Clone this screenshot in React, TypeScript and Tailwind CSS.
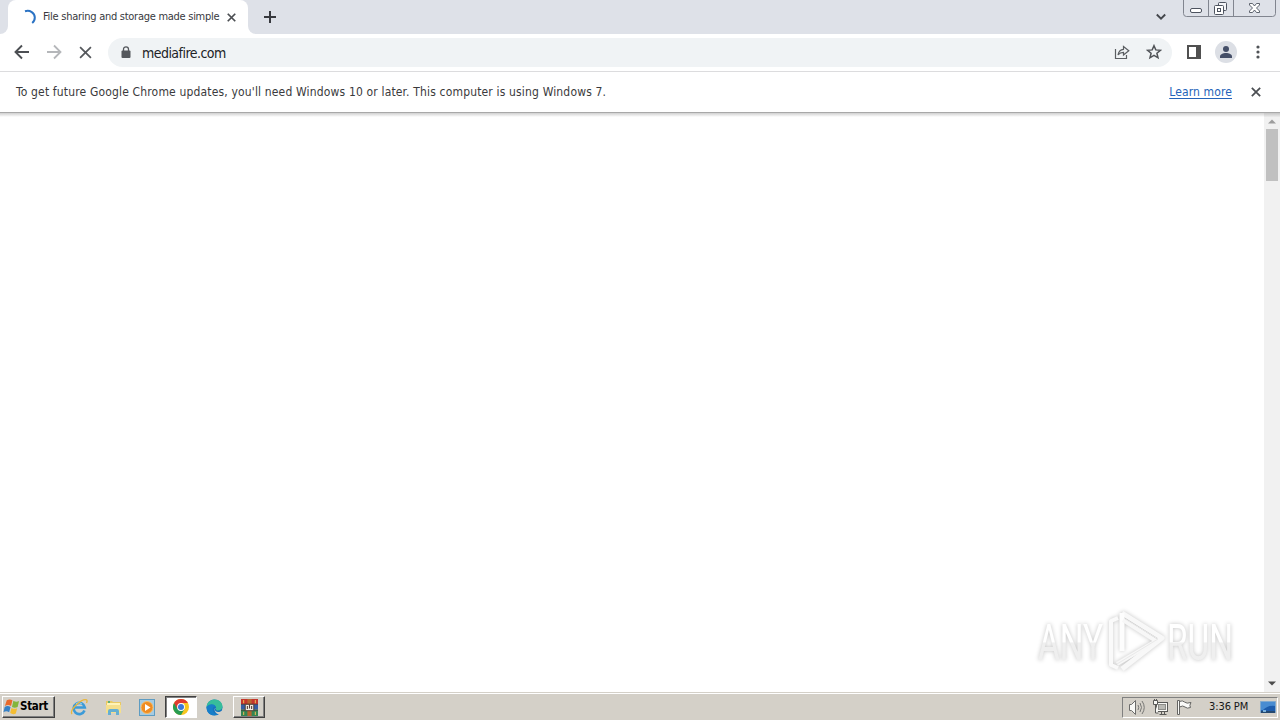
import React from 'react';

const UI_FONT = "font-['DejaVu_Sans_Condensed','DejaVu_Sans',sans-serif]";

const CloseIcon: React.FC<{ size: number; stroke?: number; color?: string }> = ({ size, stroke = 1.8, color = '#4b4e52' }) => (
  <svg width={size} height={size} viewBox="0 0 12 12" fill="none" stroke={color} strokeWidth={stroke}>
    <path d="M1 1l10 10M11 1L1 11" />
  </svg>
);

const TabStrip = () => (
  <div className="flex h-[34px] bg-[#dee1e8]">
    <div className="flex w-2 items-end bg-white">
      <div className="h-full w-2 rounded-br-lg bg-[#dee1e8]" />
    </div>
    <div className="flex w-60 items-center rounded-t-lg bg-white pl-[14px]">
      <svg width="14" height="16" viewBox="0 0 14 16" fill="none" stroke="#2b73c4" strokeWidth="2">
        <path d="M3 2.2C8 .6 12.8 4 12.8 8.5c0 2.400-1 4.300-2.600 5.500" />
      </svg>
      <span className="ml-[7px] w-[178px] whitespace-nowrap text-[11px] tracking-[-0.27px] text-[#37393d]">
        File sharing and storage made simple
      </span>
      <div className="ml-[6px]">
        <CloseIcon size={9} stroke={2.3} />
      </div>
    </div>
    <div className="w-2 bg-white">
      <div className="h-full w-2 rounded-bl-lg bg-[#dee1e8]" />
    </div>
    <svg className="ml-2 mt-[11px]" width="12" height="12" viewBox="0 0 12 12" stroke="#37393e" strokeWidth="2">
      <path d="M6 0v12M0 6h12" />
    </svg>
    <div className="ml-auto flex">
      <svg className="mr-[17px] mt-[13px]" width="10" height="8" viewBox="0 0 10 8" fill="none" stroke="#44474c" strokeWidth="1.900">
        <path d="M.8 1.500L5 5.700 9.200 1.500" />
      </svg>
      <svg className="mr-1" width="93" height="18" viewBox="0 0 93 18" fill="none" stroke="#81858f">
        <path d="M.5 0v13.500q0 3 3 3h86q3 0 3-3V0M25.500 0v16.500M50.500 0v16.500" />
        <g stroke="#4d535f">
          <rect x="7.500" y="8.500" width="11" height="4" rx="1.500" fill="#fff" />
          <rect x="35.500" y="2.500" width="8" height="8" rx="1" fill="#f3f4f7" />
          <rect x="31.500" y="5.500" width="9" height="9" rx="1" fill="#fff" />
          <rect x="34.500" y="8.500" width="3" height="3" />
          <path d="M66.500 3.500h3l2 2.500 2-2.500h3v1.500l-3 3 3 3v1.500h-3l-2-2.500-2 2.500h-3V11l3-3-3-3z" fill="#fff" strokeWidth=".9" />
        </g>
      </svg>
    </div>
  </div>
);

const Toolbar = () => (
  <div className="flex h-[38px] items-center border-b border-[#dcdcde] bg-white">
    <svg className="ml-[14px] mb-px" width="16" height="16" viewBox="0 0 16 16" fill="none" stroke="#4c4f53" strokeWidth="1.900">
      <path d="M15 8H2M8 1.500L1.500 8 8 14.500" />
    </svg>
    <svg className="ml-4 mb-px" width="16" height="16" viewBox="0 0 16 16" fill="none" stroke="#b5b7ba" strokeWidth="1.800">
      <path d="M1 8h13M8 1.500L14.500 8 8 14.500" />
    </svg>
    <div className="mb-px ml-[17px]">
      <CloseIcon size={13} stroke={1.6} color="#55585c" />
    </div>
    <div className="ml-4 flex h-[29px] w-[1064px] items-center rounded-full bg-[#f0f3f5] pl-[13px]">
      <svg width="10" height="13" viewBox="0 0 10 13">
        <rect x=".5" y="4.500" width="9" height="7.500" rx="1" fill="#55585d" />
        <path d="M2.500 5V3.300a2.500 2.500 0 015 0V5" fill="none" stroke="#55585d" strokeWidth="1.300" />
      </svg>
      <span className="ml-[11px] mt-px text-[14px] tracking-[-0.54px] text-[#202226]">mediafire.com</span>
      <svg className="mb-px ml-auto" width="16" height="16" viewBox="0 0 16 16" fill="none" stroke="#5b5e62" strokeWidth="1.200">
        <path d="M1.500 5v9.500h11V11M9.500 2.500v2.800c-3.500.4-5 2.500-5.500 5.700 1.500-2 3-2.700 5.500-2.700v2.700L14.800 6.700z" />
      </svg>
      <svg className="mb-px ml-4 mr-[10px]" width="16" height="16" viewBox="0 0 16 16" fill="none" stroke="#505357" strokeWidth="1.500">
        <path d="M8 1.700l1.800 4.200 4.600.4-3.500 3 1.100 4.500-4-2.400-4 2.400 1.100-4.500-3.500-3 4.600-.4z" />
      </svg>
    </div>
    <svg className="mb-px ml-[15px]" width="14" height="14" viewBox="0 0 14 14">
      <rect x="1" y="1" width="12" height="12" fill="#fff" stroke="#505050" strokeWidth="2" />
      <path d="M9 1h4v12H9z" fill="#505050" />
    </svg>
    <svg className="mb-px ml-[14px]" width="22" height="22" viewBox="0 0 22 22">
      <circle cx="11" cy="11" r="11" fill="#dcdfe5" />
      <circle cx="11" cy="8" r="3" fill="#454f68" />
      <path d="M5 17v-1.500c0-2.300 3-3.500 6-3.500s6 1.200 6 3.500V17z" fill="#454f68" />
    </svg>
    <svg className="mb-px ml-[19px]" width="4" height="14" viewBox="0 0 4 14" fill="#505357">
      <circle cx="2" cy="2" r="1.600" />
      <circle cx="2" cy="7" r="1.600" />
      <circle cx="2" cy="12" r="1.600" />
    </svg>
  </div>
);

const InfoBar = () => (
  <div className="flex h-10 items-center bg-white pl-4 pr-[19px] text-[12px] text-[#3a3a3c]">
    <span className="whitespace-nowrap tracking-[0.161px]">
      To get future Google Chrome updates, you'll need Windows 10 or later. This computer is using Windows 7.
    </span>
    <a className="ml-auto mr-[19px] tracking-[0.13px] text-[#2463b9] underline underline-offset-2">Learn more</a>
    <CloseIcon size={10} stroke={2.1} />
  </div>
);

const Watermark = () => (
  <svg
    className="absolute bottom-[13px] right-[28px] overflow-visible drop-shadow-[0_0_2px_rgba(0,0,0,0.24)]"
    width="220"
    height="72"
    viewBox="1032 606 220 72"
  >
    <defs>
      <linearGradient id="wm" x1="0" y1="0" x2="0" y2="1">
        <stop offset=".48" stopColor="#fff" />
        <stop offset=".5" stopColor="#efefef" />
      </linearGradient>
    </defs>
    <g fill="url(#wm)" fontFamily="Roboto, sans-serif" fontSize="50" fontWeight="400">
      <text x="1038" y="659" textLength="65" lengthAdjust="spacingAndGlyphs">ANY</text>
      <text x="1167" y="659" textLength="66" lengthAdjust="spacingAndGlyphs">RUN</text>
    </g>
    <g fill="none" strokeLinejoin="round">
      <path d="M1118 617l-7 3v44l7 3" stroke="#fafafa" strokeWidth="4" />
      <path d="M1122 612l40 25-40 31" stroke="#f8f8f8" strokeWidth="5" />
      <path d="M1122 612v38" stroke="#fdfdfd" strokeWidth="5" />
      <path d="M1117 663l39-23-33-21" stroke="#f7f7f7" strokeWidth="4" />
      <path d="M1125 618l33 20-41 25" stroke="#e9e9e9" strokeWidth="1" />
    </g>
  </svg>
);

const Page = () => (
  <main className="relative flex h-[580px] border-t border-[#a8a8a8] bg-white">
    <div className="h-1 flex-1 bg-gradient-to-b from-[#d0d0d0] to-white" />
    <div className="flex w-4 flex-col items-center bg-[#f1f1f1]">
      <div className="h-1 w-full bg-gradient-to-b from-[#c5c5c5] to-[#ececec]" />
      <svg className="mt-[2px]" width="8" height="5" viewBox="0 0 8 5" fill="#9d9d9d">
        <path d="M0 4.500L4 .5l4 4z" />
      </svg>
      <div className="mt-[5px] h-[52px] w-3 bg-[#c0c0c0]" />
      <svg className="mb-[6px] mt-auto" width="8" height="5" viewBox="0 0 8 5" fill="#4c4c4c">
        <path d="M0 .5L4 4.500l4-4z" />
      </svg>
    </div>
    <Watermark />
  </main>
);

const WindowsLogo = () => (
  <svg className="mb-px shrink-0" width="17" height="17" viewBox="0 0 18 17">
    <path d="M4 2q3-2 6 0L8.500 8q-3-2-6.500 0z" fill="#e96a2b" />
    <path d="M11 2.500q3 2 6 .3L15.500 9q-3 1.500-6 0z" fill="#83b53b" />
    <path d="M1.800 9q3-2 6.200 0l-1.500 5.500q-3-2-6 0z" fill="#3681c6" />
    <path d="M9 10q3 1.800 6 .3L13.600 16q-3 1.500-6-.5z" fill="#f4bd32" />
  </svg>
);

const ExplorerE = () => (
  <svg width="18" height="18" viewBox="0 0 18 18" fill="none">
    <path d="M14.500 12.500A5.600 5.600 0 1114.800 9.500H5" stroke="#3c9bd8" strokeWidth="2.600" />
    <path d="M6 5.500a5 5 0 016 .5" stroke="#9bd4f2" />
    <path d="M2 16C-1 12 12 0 16.500 1.800c1 .8.500 2.200 0 3.200" stroke="#e9b63a" strokeWidth="1.300" />
  </svg>
);

const FolderIcon = () => (
  <svg width="17" height="17" viewBox="0 0 17 17">
    <path d="M1 2h6l1 1h8v11H1z" fill="#e9c964" />
    <path d="M2 4h13v3H2z" fill="#fff3b7" />
    <path d="M1 6h15v8H1z" fill="#f5df8c" />
    <path d="M3 16v-4q0-2 2-2h7q2 0 2 2v4h-3v-3H6v3z" fill="#65afd2" />
    <path d="M3 2h2v2H3z" fill="#60ae79" />
  </svg>
);

const MediaIcon = () => (
  <svg width="16" height="17" viewBox="0 0 16 17">
    <rect x=".5" y=".5" width="15" height="16" fill="#a6cbe1" stroke="#5e9cc2" />
    <circle cx="8" cy="8.500" r="6" fill="#ef8c22" stroke="#f9bd66" />
    <path d="M6 5l5.500 3.500L6 12z" fill="#fff" />
  </svg>
);

const ChromeIcon = () => (
  <svg width="16" height="16" viewBox="0 0 16 16">
    <circle cx="8" cy="8" r="8" fill="#f7c61f" />
    <path d="M8 8L1.070 4A8 8 0 008 16l3.500-6z" fill="#279c51" />
    <path d="M8 4h6.930L11.500 10 8 8z" fill="#f7c61f" />
    <path d="M1.070 4A8 8 0 0114.930 4H8L4.500 10z" fill="#df3b30" />
    <circle cx="8" cy="8" r="3.900" fill="#fff" />
    <circle cx="8" cy="8" r="3" fill="#3978da" />
  </svg>
);

const EdgeIcon = () => (
  <svg width="17" height="17" viewBox="0 0 17 17">
    <circle cx="8.500" cy="8.500" r="8" fill="#1673bd" />
    <path d="M.5 8C1 2.500 5 .5 8.500.5c5 0 8 3.500 8 7 0 2.500-2 4-4.500 4-1.500 0-2.500-.6-2-1.500C11 7 6.500 3.500.5 8z" fill="#37bd9b" />
    <path d="M.5 8C4 4 8 5 9.500 7.500 6.500 7 5.500 12 9 14.500 12 16 14 13.500 15.500 12 12 18.500.5 18 .5 8z" fill="#177ec9" />
    <path d="M10 9c-2 1-1 4 2 4 2 0 3-.5 4.500-2v3l-2 1.500C9 16 7 9 10 9z" fill="#d4d0c8" />
  </svg>
);

const ArchiveIcon = () => (
  <svg width="17" height="17" viewBox="0 0 16 16">
    <path d="M0 0h16v5H0z" fill="#c4362c" />
    <path d="M0 5h16v5H0z" fill="#355da3" />
    <path d="M0 10h16v6H0z" fill="#348553" />
    <path d="M6 0h4v16H6z" fill="#b9642f" />
    <path d="M0 5h16M0 10.500h16" stroke="#3c2f35" strokeWidth=".7" />
    <path d="M4 5h8v6H4z" fill="#f1ece0" stroke="#443027" strokeWidth=".8" />
    <path d="M6 6.500v3M8 5v4M10 6.500v3" stroke="#533d37" />
    <path d="M2.500 1v3M13.500 1v3M2.500 12v3M13.500 12v3" stroke="#e7b553" />
  </svg>
);

const Tray = () => (
  <div className="mr-[2px] flex h-[21px] w-[156px] items-center border border-b-white border-l-[#808080] border-r-white border-t-[#808080] pl-[5px]">
    <svg width="18" height="17" viewBox="0 0 18 17" fill="none" stroke="#6c6c6b">
      <path d="M1.500 5.500h2l4-4v14l-4-4h-2z" fill="#f9f9f6" strokeLinejoin="round" />
      <path d="M10 6q1.500 2.500 0 5M12 4q3 4.500 0 9M14 2q4.500 6.500 0 13" stroke="#777775" />
    </svg>
    <svg className="ml-[6px]" width="17" height="17" viewBox="0 0 17 17" fill="none" stroke="#595957">
      <rect x="4.500" y="3.500" width="11" height="9" fill="#f8f8f5" />
      <rect x="6.500" y="5.500" width="7" height="5" fill="#b9b9b4" stroke="#8c8c88" />
      <path d="M7.500 15.500h7M9.500 13v2M12.500 13v2" />
      <path d="M1.500 1.500h4v4h-4zM3.500 6v8h3" fill="#f8f8f5" />
      <path d="M2.500 0v2M4.500 0v2" />
    </svg>
    <svg className="ml-[7px]" width="17" height="17" viewBox="0 0 17 17" fill="#fafaf8" stroke="#656563">
      <path d="M1.500 1.500h2v14h-2zM3.500 2.500q3-1.500 5 .5t6.500.5q-2 3-.5 5-3.500 1.500-5.500-.5t-5.500 0z" />
    </svg>
    <span className="ml-4 whitespace-nowrap text-[11px] tracking-[-0.1px] text-[#161616]">3:36 PM</span>
    <svg className="ml-auto mr-px" width="16" height="14" viewBox="0 0 16 14">
      <path d="M.5 1.500h15v11H.5z" fill="#1d5cac" stroke="#80a9ce" />
      <path d="M1 2h14v4Q8 5 3 10H1z" fill="#498cd1" />
      <path d="M1 11h14v2H1z" fill="#244970" />
      <path d="M3 10h3v2H3z" fill="#79b1dc" />
    </svg>
  </div>
);

const Taskbar = () => (
  <footer className="flex h-7 items-center border-t border-[#d4d0c8] bg-[#d4d0c8] pt-px shadow-[inset_0_1px_0_#fff]">
    <button className="ml-[2px] flex h-[22px] w-[53px] items-center border border-b-[#404040] border-l-white border-r-[#404040] border-t-white text-[11.5px] font-bold tracking-[-0.3px] text-black shadow-[inset_-1px_-1px_0_#808080]">
      <WindowsLogo />
      Start
    </button>
    <div className="ml-[15px] flex items-center">
      <div className="flex w-[34px]"><ExplorerE /></div>
      <div className="flex w-[34px] pl-px"><FolderIcon /></div>
      <div className="flex w-[27px] pl-px"><MediaIcon /></div>
      <div className="flex h-[22px] w-8 items-center justify-center border border-b-white border-l-[#404040] border-r-white border-t-[#404040] bg-white shadow-[inset_1px_1px_0_#808080]">
        <ChromeIcon />
      </div>
      <div className="ml-[9px] flex"><EdgeIcon /></div>
      <div className="ml-[10px] flex h-[22px] w-8 items-center justify-center border border-b-[#404040] border-l-white border-r-[#404040] border-t-white shadow-[inset_-1px_-1px_0_#808080]">
        <ArchiveIcon />
      </div>
    </div>
    <div className="ml-auto">
      <Tray />
    </div>
  </footer>
);

export default function App() {
  return (
    <div className={`flex h-[720px] w-[1280px] flex-col overflow-hidden bg-white ${UI_FONT}`}>
      <TabStrip />
      <Toolbar />
      <InfoBar />
      <Page />
      <Taskbar />
    </div>
  );
}
